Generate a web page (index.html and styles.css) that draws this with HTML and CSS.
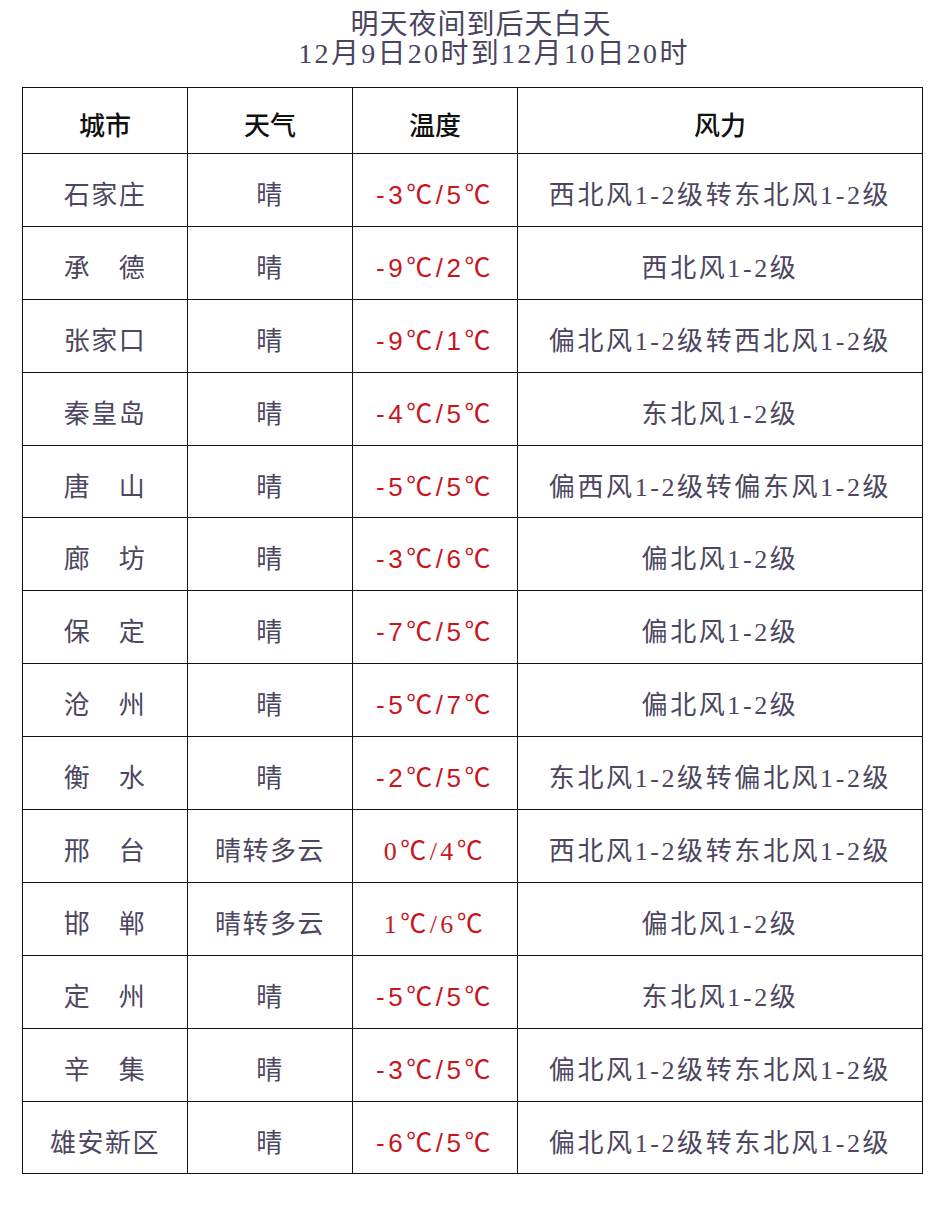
FILE: index.html
```html
<!DOCTYPE html>
<html lang="zh">
<head>
<meta charset="utf-8">
<link rel="stylesheet" href="styles.css">
</head>
<body>
<div class="title">
  <div class="l1">明天夜间到后天白天</div>
  <div class="l2">12月9日20时到12月10日20时</div>
</div>
<table class="wx">
  <tr class="head"><th class="c1">城市</th><th class="c2">天气</th><th class="c3">温度</th><th class="c4">风力</th></tr>
  <tr><td>石家庄</td><td>晴</td><td class="t">-3℃/5℃</td><td class="w">西北风1-2级转东北风1-2级</td></tr>
  <tr><td>承　德</td><td>晴</td><td class="t">-9℃/2℃</td><td class="w">西北风1-2级</td></tr>
  <tr><td>张家口</td><td>晴</td><td class="t">-9℃/1℃</td><td class="w">偏北风1-2级转西北风1-2级</td></tr>
  <tr><td>秦皇岛</td><td>晴</td><td class="t">-4℃/5℃</td><td class="w">东北风1-2级</td></tr>
  <tr><td>唐　山</td><td>晴</td><td class="t">-5℃/5℃</td><td class="w">偏西风1-2级转偏东风1-2级</td></tr>
  <tr><td>廊　坊</td><td>晴</td><td class="t">-3℃/6℃</td><td class="w">偏北风1-2级</td></tr>
  <tr><td>保　定</td><td>晴</td><td class="t">-7℃/5℃</td><td class="w">偏北风1-2级</td></tr>
  <tr><td>沧　州</td><td>晴</td><td class="t">-5℃/7℃</td><td class="w">偏北风1-2级</td></tr>
  <tr><td>衡　水</td><td>晴</td><td class="t">-2℃/5℃</td><td class="w">东北风1-2级转偏北风1-2级</td></tr>
  <tr><td>邢　台</td><td>晴转多云</td><td class="t ts">0℃/4℃</td><td class="w">西北风1-2级转东北风1-2级</td></tr>
  <tr><td>邯　郸</td><td>晴转多云</td><td class="t ts">1℃/6℃</td><td class="w">偏北风1-2级</td></tr>
  <tr><td>定　州</td><td>晴</td><td class="t">-5℃/5℃</td><td class="w">东北风1-2级</td></tr>
  <tr><td>辛　集</td><td>晴</td><td class="t">-3℃/5℃</td><td class="w">偏北风1-2级转东北风1-2级</td></tr>
  <tr><td>雄安新区</td><td>晴</td><td class="t">-6℃/5℃</td><td class="w">偏北风1-2级转东北风1-2级</td></tr>
</table>
</body>
</html>
```
FILE: styles.css
```css
html, body {
  margin: 0;
  padding: 0;
  background: #ffffff;
}
body {
  width: 942px;
  font-family: "Liberation Serif", "Noto Sans CJK SC", serif;
  color: #4c4660;
}
.title {
  padding: 10px 0 0 46px;
  text-align: center;
  font-size: 28px;
  line-height: 29px;
  color: #4a4460;
}
.title .l1 {
  padding-right: 26px;
  letter-spacing: 1px;
}
.title .l2 {
  letter-spacing: 2.3px;
}
.wx {
  margin: 19px 0 0 22px;
  width: 896px;
  border-collapse: collapse;
  table-layout: fixed;
}
.wx th, .wx td {
  border: 1.6px solid #111111;
  text-align: center;
  padding: 5px 0 0 0;
  font-weight: normal;
}
.wx th {
  height: 60px;
  color: #111111;
  font-size: 26px;
  font-weight: 500;
}
.wx td {
  height: 66.9px;
  font-size: 26px;
  letter-spacing: 1.5px;
}
.c1, .c2, .c3 { width: 164px; }
.c4 { width: 404px; }
.wx td.t {
  color: #c8161e;
  font-family: "Liberation Sans", "Noto Sans CJK SC", sans-serif;
  letter-spacing: 3.5px;
}
.wx td.ts {
  font-family: "Liberation Serif", "Noto Sans CJK SC", serif;
}
.wx td.w {
  letter-spacing: 2.6px;
}
```
